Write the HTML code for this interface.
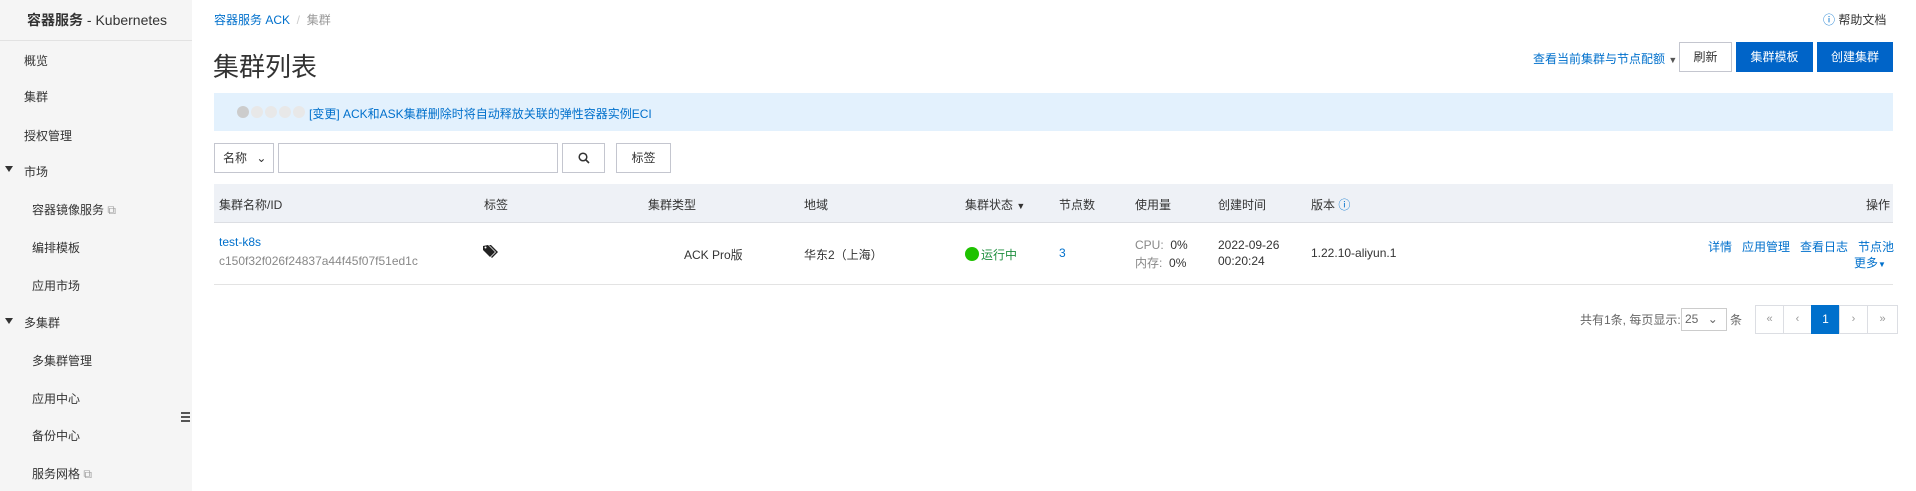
<!DOCTYPE html>
<html><head><meta charset="utf-8"><style>
*{box-sizing:border-box;margin:0;padding:0}
body{width:1916px;height:491px;overflow:hidden;background:#fff;font-family:"Liberation Sans","Noto Sans CJK SC",sans-serif;font-size:12px;color:#333;position:relative}
.a{position:absolute;white-space:nowrap}
.side{position:absolute;left:0;top:0;width:192px;height:491px;background:#f5f5f5}
.blue{color:#0070cc}
.btn{position:absolute;height:30px;line-height:28px;text-align:center;border:1px solid #c4c6cf;background:#fff;font-size:12px}
.pb{background:#0064c8;border-color:#0064c8;color:#fff}
.tri{position:absolute;width:0;height:0;border-left:4px solid transparent;border-right:4px solid transparent;border-top:6px solid #333}
.pg{position:absolute;top:305px;width:29px;height:29px;border:1px solid #dcdee3;text-align:center;line-height:27px;color:#999;font-size:11px}
</style></head><body>
<div class="side">
<div class="a" style="left:27px;top:10px;font-size:14px;color:#333"><b>容器服务</b> - Kubernetes</div>
<div class="a" style="left:0;top:40px;width:192px;height:1px;background:#e2e2e2"></div>
<div class="a" style="left:24px;top:52px">概览</div>
<div class="a" style="left:24px;top:88px">集群</div>
<div class="a" style="left:24px;top:127px">授权管理</div>
<div class="tri" style="left:5px;top:166px"></div>
<div class="a" style="left:24px;top:163px">市场</div>
<div class="a" style="left:32px;top:201px">容器镜像服务 <span style="color:#999">⧉</span></div>
<div class="a" style="left:32px;top:239px">编排模板</div>
<div class="a" style="left:32px;top:277px">应用市场</div>
<div class="tri" style="left:5px;top:318px"></div>
<div class="a" style="left:24px;top:314px">多集群</div>
<div class="a" style="left:32px;top:352px">多集群管理</div>
<div class="a" style="left:32px;top:390px">应用中心</div>
<div class="a" style="left:32px;top:427px">备份中心</div>
<div class="a" style="left:32px;top:465px">服务网格 <span style="color:#999">⧉</span></div>
<div class="a" style="left:181px;top:412px;width:9px;height:2px;background:#555;box-shadow:0 4px 0 #555,0 8px 0 #555"></div>
</div>
<div class="a blue" style="left:214px;top:11px">容器服务 ACK <span style="color:#ccc">&nbsp;/&nbsp;</span> <span style="color:#999">集群</span></div>
<div class="a" style="left:1823px;top:11px"><span class="blue">ⓘ</span> 帮助文档</div>
<div class="a" style="left:213px;top:47px;font-size:26px;color:#333">集群列表</div>
<div class="a blue" style="left:1533px;top:50px">查看当前集群与节点配额 <span style="font-size:9px;color:#555">▼</span></div>
<div class="btn" style="left:1679px;top:42px;width:53px">刷新</div>
<div class="btn pb" style="left:1736px;top:42px;width:77px">集群模板</div>
<div class="btn pb" style="left:1817px;top:42px;width:76px">创建集群</div>
<div class="a" style="left:214px;top:93px;width:1679px;height:38px;background:#e3f1fd"></div>
<div class="a" style="left:237px;top:106px;width:12px;height:12px;border-radius:6px;background:#ccc;box-shadow:14px 0 0 #e8e8e8,28px 0 0 #e8e8e8,42px 0 0 #e8e8e8,56px 0 0 #e8e8e8"></div>
<div class="a blue" style="left:309px;top:105px">[变更] ACK和ASK集群删除时将自动释放关联的弹性容器实例ECI</div>
<div class="btn" style="left:214px;top:143px;width:60px;text-align:left;padding-left:8px">名称 <span style="margin-left:6px">⌄</span></div>
<div class="btn" style="left:278px;top:143px;width:280px"></div>
<div class="btn" style="left:562px;top:143px;width:43px"><svg width="12" height="12" viewBox="0 0 12 12" style="margin-top:8px"><circle cx="5" cy="5" r="3.8" fill="none" stroke="#333" stroke-width="1.5"/><path d="M8 8l3 3" stroke="#333" stroke-width="1.6"/></svg></div>
<div class="btn" style="left:616px;top:143px;width:55px">标签</div>
<div class="a" style="left:214px;top:184px;width:1679px;height:39px;background:#eef1f6;border-bottom:1px solid #dcdee3"></div>
<div class="a" style="left:219px;top:196px">集群名称/ID</div>
<div class="a" style="left:484px;top:196px">标签</div>
<div class="a" style="left:648px;top:196px">集群类型</div>
<div class="a" style="left:804px;top:196px">地域</div>
<div class="a" style="left:965px;top:196px">集群状态 <span style="font-size:9px">▼</span></div>
<div class="a" style="left:1059px;top:196px">节点数</div>
<div class="a" style="left:1135px;top:196px">使用量</div>
<div class="a" style="left:1218px;top:196px">创建时间</div>
<div class="a" style="left:1311px;top:196px">版本 <span class="blue">ⓘ</span></div>
<div class="a" style="left:1866px;top:196px">操作</div>
<div class="a" style="left:214px;top:284px;width:1679px;height:1px;background:#e3e3e3"></div>
<div class="a blue" style="left:219px;top:235px">test-k8s</div>
<div class="a" style="left:219px;top:254px;color:#888">c150f32f026f24837a44f45f07f51ed1c</div>
<svg class="a" style="left:483px;top:245px" width="15" height="13" viewBox="0 0 15 13"><path d="M0 1v4l7 7 5-5-7-7z" fill="#222"/><circle cx="2.5" cy="2.5" r="1" fill="#fff"/><path d="M6 0l7 7-5 5 1 1 6-6-7-7z" fill="#222"/></svg>
<div class="a" style="left:684px;top:246px">ACK Pro版</div>
<div class="a" style="left:804px;top:246px">华东2（上海）</div>
<div class="a" style="left:965px;top:247px;width:14px;height:14px;border-radius:7px;background:#1ec200"></div>
<div class="a" style="left:981px;top:246px;color:#1e8e3e">运行中</div>
<div class="a blue" style="left:1059px;top:246px">3</div>
<div class="a" style="left:1135px;top:238px;color:#888">CPU:&nbsp;&nbsp;<span style="color:#333">0%</span></div>
<div class="a" style="left:1135px;top:254px;color:#888">内存:&nbsp;&nbsp;<span style="color:#333">0%</span></div>
<div class="a" style="left:1218px;top:238px">2022-09-26</div>
<div class="a" style="left:1218px;top:254px">00:20:24</div>
<div class="a" style="left:1311px;top:246px">1.22.10-aliyun.1</div>
<div class="a blue" style="left:1708px;top:238px">详情&nbsp;&nbsp;&nbsp;应用管理&nbsp;&nbsp;&nbsp;查看日志&nbsp;&nbsp;&nbsp;节点池</div>
<div class="a blue" style="left:1854px;top:254px">更多<span style="font-size:8px">▼</span></div>
<div class="a" style="left:1580px;top:311px;color:#666">共有1条, 每页显示:</div>
<div class="a" style="left:1681px;top:308px;width:46px;height:23px;border:1px solid #ccc;color:#666;padding-left:3px;line-height:21px">25 <span style="margin-left:6px">⌄</span></div>
<div class="a" style="left:1730px;top:311px;color:#666">条</div>
<div class="pg" style="left:1755px">«</div>
<div class="pg" style="left:1783px">‹</div>
<div class="pg" style="left:1811px;background:#0070cc;border-color:#0070cc;color:#fff;font-size:12px">1</div>
<div class="pg" style="left:1839px">›</div>
<div class="pg" style="left:1867px;width:31px">»</div>
</body></html>
